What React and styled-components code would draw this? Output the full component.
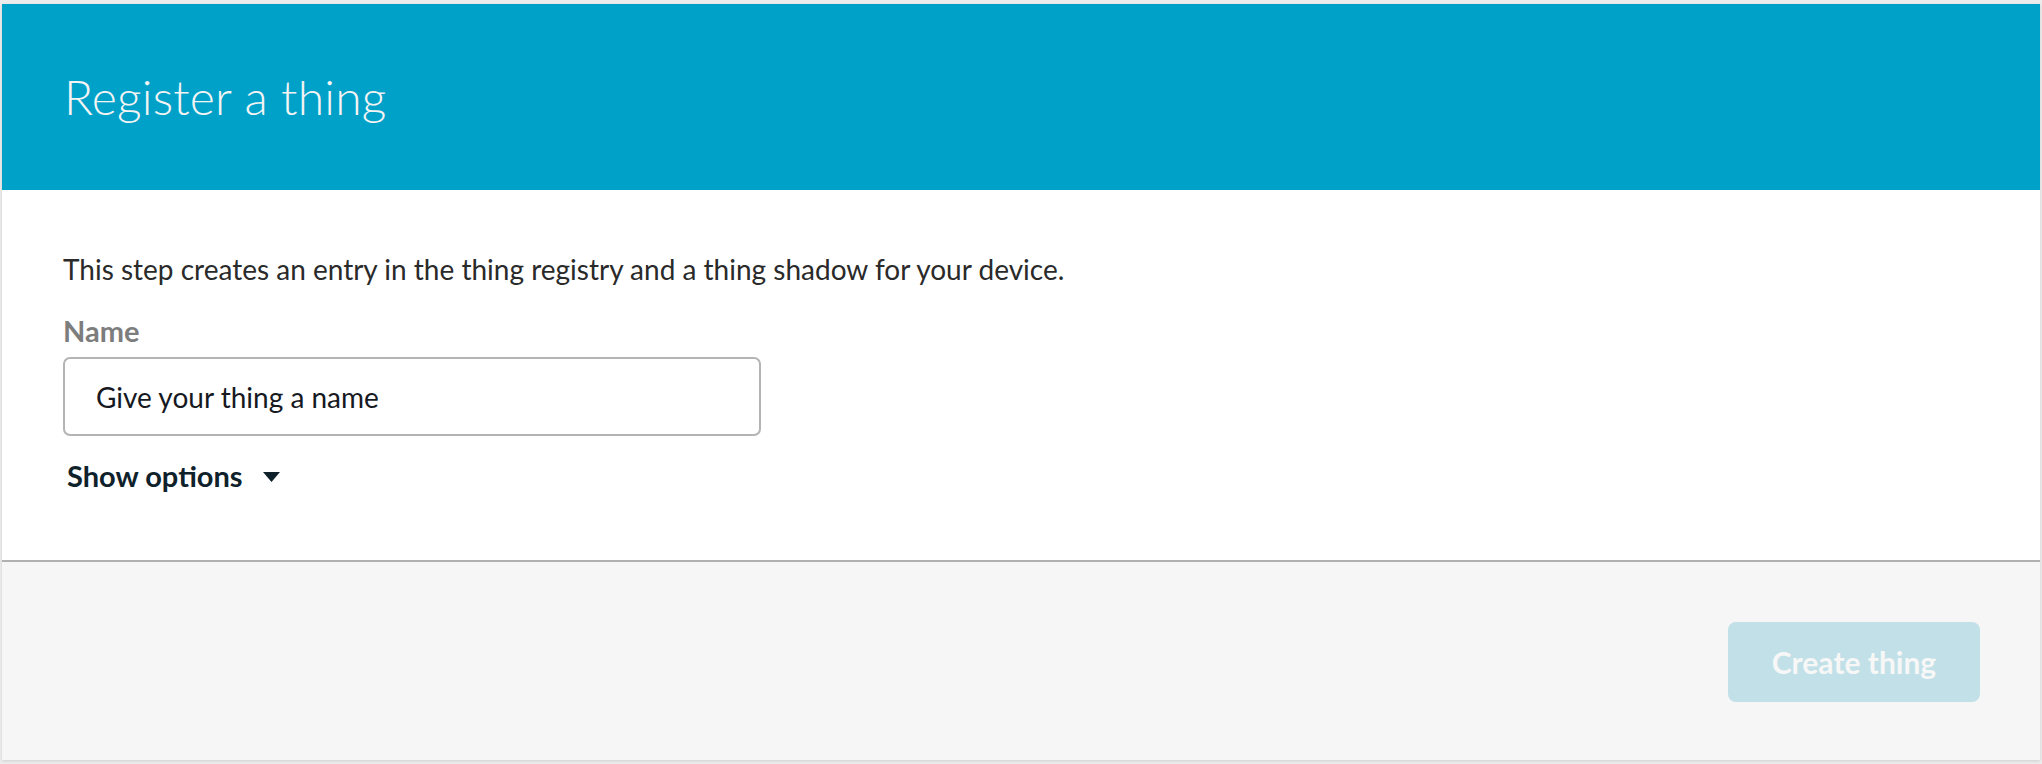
import React from 'react';
import styled, { createGlobalStyle } from 'styled-components';

const GlobalStyle = createGlobalStyle`
    html, body {
        margin: 0;
        padding: 0;
        background: #ececec;
    }

    body {
        font-family: Lato, "Open Sans", sans-serif;
    }
`;

const Card = styled.section`
    margin: 4px 2px 4px 2px;
    background: #ffffff;
    box-shadow: 0 1px 3px rgba(0, 0, 0, 0.12);
    display: flex;
    flex-direction: column;
`;

const Header = styled.header`
    height: 186px;
    background: #00a1c9;
    display: flex;
    align-items: center;
    padding: 0 62px;

    h1 {
        margin: 0 0 2px;
        font-size: 48px;
        font-weight: 300;
        color: #f4f4f4;
        letter-spacing: 0.2px;
    }
`;

const Body = styled.div`
    height: 370px;
    box-sizing: border-box;
    padding: 59px 61px 0;
    color: #16191f;
`;

const Intro = styled.p`
    margin: 0 0 24px;
    font-size: 28px;
    line-height: 40px;
    color: #2a2a2a;
`;

const Label = styled.label`
    display: block;
    font-size: 29px;
    font-weight: 700;
    line-height: 36px;
    color: #7d7d7d;
    margin-bottom: 8px;
`;

const TextInput = styled.input`
    display: block;
    box-sizing: border-box;
    width: 698px;
    height: 79px;
    padding: 0 31px;
    border: 2px solid #b4b4b4;
    border-radius: 7px;
    font-family: Lato, "Open Sans", sans-serif;
    font-size: 28px;
    color: #16191f;
    background: #ffffff;
    outline: none;

    &::placeholder {
        color: #16191f;
        opacity: 1;
    }
`;

const Toggle = styled.button`
    display: flex;
    align-items: center;
    gap: 20px;
    margin-top: 22px;
    padding: 0 0 0 4px;
    border: none;
    background: none;
    font-family: Lato, "Open Sans", sans-serif;
    font-size: 29px;
    font-weight: 700;
    line-height: 36px;
    color: #0f222b;
    cursor: pointer;

    svg {
        margin-top: 2px;
    }
`;

const Footer = styled.footer`
    height: 198px;
    border-top: 2px solid #b0b0b0;
    background: #f6f6f6;
    display: flex;
    align-items: center;
    justify-content: flex-end;
    padding: 0 60px;
`;

const PrimaryButton = styled.button`
    width: 252px;
    height: 80px;
    border: none;
    border-radius: 8px;
    background: ${props => (props.disabled ? '#c2e0e7' : '#ec7211')};
    color: #f7f7f7;
    font-family: Lato, "Open Sans", sans-serif;
    font-size: 30px;
    font-weight: 700;
    margin-top: 2px;
`;

const App = () => {
    return (
        <>
            <GlobalStyle />
            <Card>
                <Header>
                    <h1>Register a thing</h1>
                </Header>
                <Body>
                    <Intro>This step creates an entry in the thing registry and a thing shadow for your device.</Intro>
                    <Label htmlFor="thing-name">Name</Label>
                    <TextInput id="thing-name" placeholder="Give your thing a name" />
                    <Toggle type="button">
                        Show options
                        <svg width="17" height="10" viewBox="0 0 17 10">
                            <path d="M0 0 H17 L8.5 10 Z" fill="#0f222b" />
                        </svg>
                    </Toggle>
                </Body>
                <Footer>
                    <PrimaryButton disabled>Create thing</PrimaryButton>
                </Footer>
            </Card>
        </>
    );
};

export default App;
